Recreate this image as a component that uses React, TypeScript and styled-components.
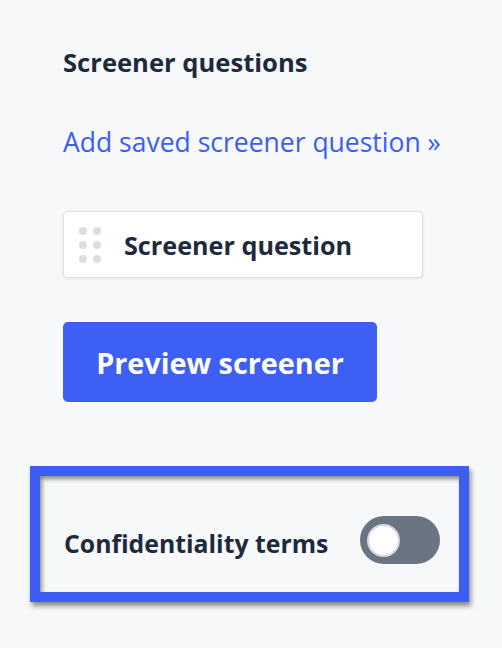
import React from "react";
import styled, { createGlobalStyle } from "styled-components";

const GlobalStyle = createGlobalStyle`
  html, body {
    margin: 0;
    padding: 0;
    background: #f7f8fa;
  }
  body {
    font-family: "Open Sans", "Lato", sans-serif;
    color: #1e2a3c;
  }
`;

const App: React.FC = () => {
  return (
    <>
      <GlobalStyle />
      <Panel>
        <Heading>Screener questions</Heading>
        <SavedLink href="#">Add saved screener question »</SavedLink>
        <QuestionCard>
          <DragHandle>
            {Array.from({ length: 6 }).map((_, i) => (
              <Dot key={i} />
            ))}
          </DragHandle>
          <QuestionLabel>Screener question</QuestionLabel>
        </QuestionCard>
        <PreviewButton>Preview screener</PreviewButton>
        <Highlight>
          <ToggleLabel>Confidentiality terms</ToggleLabel>
          <Toggle aria-label="Confidentiality terms">
            <Knob />
          </Toggle>
        </Highlight>
      </Panel>
    </>
  );
};

export default App;

const Panel = styled.div`
  display: flex;
  flex-direction: column;
  align-items: flex-start;
  padding: 47px 0 40px 63px;
  min-height: 648px;
  box-sizing: border-box;
`;

const Heading = styled.h2`
  margin: 0;
  font-size: 25.6px;
  font-weight: 700;
  line-height: 32px;
  color: #1e2a3c;
`;

const SavedLink = styled.a`
  margin-top: 46px;
  font-size: 26.5px;
  line-height: 34px;
  color: #3b5cf5;
  text-decoration: none;
`;

const QuestionCard = styled.div`
  margin-top: 52px;
  width: 360px;
  height: 67px;
  box-sizing: border-box;
  display: flex;
  align-items: center;
  gap: 23px;
  padding-left: 15px;
  background: #ffffff;
  border: 1px solid #dcdee2;
  border-radius: 4px;
  box-shadow: 0 1px 3px rgba(0, 0, 0, 0.08);
`;

const DragHandle = styled.div`
  display: grid;
  grid-template-columns: repeat(2, 8px);
  grid-auto-rows: 8px;
  column-gap: 6px;
  row-gap: 6px;
`;

const Dot = styled.span`
  width: 8px;
  height: 8px;
  border-radius: 50%;
  background: #dadde2;
`;

const QuestionLabel = styled.span`
  font-size: 25.2px;
  font-weight: 700;
  color: #1e2a3c;
`;

const PreviewButton = styled.button`
  margin-top: 44px;
  width: 314px;
  height: 80px;
  border: none;
  border-radius: 5px;
  background: #3d5ff3;
  color: #ffffff;
  font-family: inherit;
  font-size: 28.8px;
  font-weight: 700;
  cursor: pointer;
`;

const Highlight = styled.div`
  margin-top: 64px;
  margin-left: -33px;
  width: 439px;
  height: 136px;
  box-sizing: border-box;
  border: 10px solid #3d5ef2;
  display: flex;
  align-items: center;
  justify-content: space-between;
  padding: 12px 19px 0 24px;
  box-shadow: 2px 4px 5px rgba(0, 0, 0, 0.45),
    inset 2px 3px 4px rgba(0, 0, 0, 0.45);
`;

const ToggleLabel = styled.span`
  font-size: 24.8px;
  font-weight: 700;
  color: #1e2a3c;
  padding-top: 5px;
`;

const Toggle = styled.div`
  width: 80px;
  height: 48px;
  border-radius: 24px;
  background: #6b7482;
  display: flex;
  align-items: center;
  padding-left: 7px;
  box-sizing: border-box;
`;

const Knob = styled.span`
  width: 33px;
  height: 33px;
  box-sizing: border-box;
  border-radius: 50%;
  background: #ffffff;
  border: 2px solid #d4d8de;
`;
